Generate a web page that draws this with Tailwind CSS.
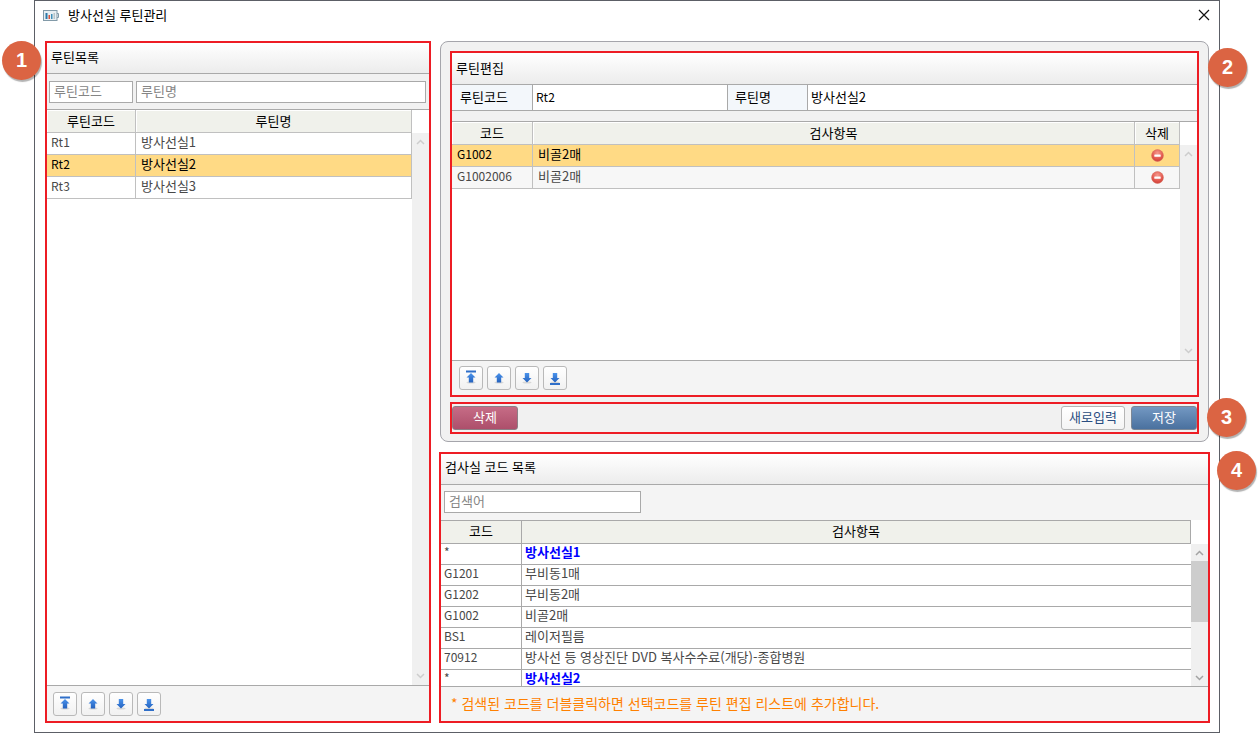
<!DOCTYPE html>
<html lang="ko">
<head>
<meta charset="utf-8">
<meta name="viewport" content="width=device-width, initial-scale=1">
<title>방사선실 루틴관리</title>
<script src="https://cdn.jsdelivr.net/npm/@tailwindcss/browser@4"></script>
</head>
<body class="bg-white font-['Noto_Sans_CJK_KR',sans-serif] text-[13px] leading-4 text-black">
<svg class="absolute size-0" aria-hidden="true">
  <defs>
    <linearGradient id="blue" x1="0" x2="0" y1="0" y2="1"><stop offset="0" stop-color="#4a93ec"/><stop offset="1" stop-color="#2461bd"/></linearGradient>
    <radialGradient id="red" cx=".5" cy=".3" r=".75"><stop offset="0" stop-color="#f59a8e"/><stop offset=".6" stop-color="#e45a50"/><stop offset="1" stop-color="#c93a34"/></radialGradient>
    <symbol id="up" viewBox="0 0 22 22"><ellipse cx="11" cy="15.5" rx="4.5" ry="1" fill="#000" opacity=".12"/><path d="M11 6l4.500 4.500h-2.300v5H8.800v-5H6.500z" fill="url(#blue)"/></symbol>
    <symbol id="down" viewBox="0 0 22 22"><ellipse cx="11" cy="15.5" rx="4.5" ry="1" fill="#000" opacity=".12"/><path d="M11 15.500L6.500 11h2.300V6h4.400v5h2.300z" fill="url(#blue)"/></symbol>
    <symbol id="top" viewBox="0 0 22 22"><use href="#up"/><path d="M6 3.500h10v2H6z" fill="#2f6fc9"/></symbol>
    <symbol id="bottom" viewBox="0 0 22 22"><use href="#down"/><path d="M6 16h10v2H6z" fill="#2f6fc9"/></symbol>
    <symbol id="minus" viewBox="0 0 13 13"><circle cx="6.500" cy="6.500" r="5.900" fill="url(#red)" stroke="#d9705f" stroke-width=".6"/><rect x="3.300" y="5.500" width="6.400" height="2.200" rx=".5" fill="#fff"/></symbol>
    <symbol id="chev-up" viewBox="0 0 9 6"><path d="M1 5l3.500-3.500L8 5" fill="none" stroke="currentColor" stroke-width="1.500"/></symbol>
    <symbol id="chev-down" viewBox="0 0 9 6"><path d="M1 1l3.500 3.500L8 1" fill="none" stroke="currentColor" stroke-width="1.500"/></symbol>
  </defs>
</svg>

<div class="h-screen min-h-[600px] pr-[39px] pl-[34px]">
<div class="flex h-full flex-col border border-[#5c5f66] bg-white">
  <header class="flex h-10 shrink-0 items-start pt-[6px] pr-[9px] pl-2">
    <svg class="mt-[3px] h-[11px] w-4 shrink-0" viewBox="0 0 16 11"><rect x=".5" y=".5" width="13.500" height="10" fill="#e8eff3" stroke="#829aa8"/><path d="M14 3.500h1.500v4H14" fill="none" stroke="#829aa8"/><path d="M2.500 3h2v6h-2z" fill="#2b78a8"/><path d="M5.500 5h1.500v4H5.500z" fill="#d8523c"/><path d="M8 4h1.500v5H8z" fill="#3f8fb8"/><path d="M10.500 3h1.500v6h-1.500z" fill="#b9c5c9"/></svg>
    <h1 class="ml-[9px] flex-1">방사선실 루틴관리</h1>
    <button type="button" aria-label="닫기" class="mt-[2px] size-3"><svg class="size-3" viewBox="0 0 12 12"><path d="M1 1l10 10M11 1L1 11" stroke="#111" stroke-width="1.200"/></svg></button>
  </header>

  <main class="flex min-h-0 flex-1 gap-2 pr-[9px] pb-[9px] pl-[10px]">
    <section class="relative flex w-[386px] shrink-0 flex-col border-2 border-[#ed1c24]">
      <span class="absolute -top-[2px] -left-[45px] flex size-[39px] items-center justify-center rounded-full bg-[#db6443] pb-px font-['Liberation_Sans'] text-xl font-bold text-white shadow-[1px_2px_1px_rgba(0,0,0,0.3)]">1</span>
      <h2 class="h-[31px] shrink-0 border-b border-[#a9a9a9] bg-linear-to-b from-white to-[#ececec] pt-[6px] pl-1">루틴목록</h2>
      <div class="flex h-9 shrink-0 gap-[3px] border-b border-[#a9a9a9] bg-[#f1f1f1] pt-[7px] pr-[3px] pl-[2px]">
        <input aria-label="루틴코드" placeholder="루틴코드" class="h-[22px] w-[84px] border border-[#a9a9a9] bg-white px-1 pb-[3px] placeholder:text-[#858585]">
        <input aria-label="루틴명" placeholder="루틴명" class="h-[22px] min-w-0 flex-1 border border-[#a9a9a9] bg-white px-1 pb-[3px] placeholder:text-[#858585]">
      </div>
      <div class="flex min-h-0 flex-1">
        <div class="min-w-0 flex-1">
          <table class="w-full table-fixed border-separate border-spacing-0 text-[#484848]">
            <colgroup><col class="w-[89px]"><col></colgroup>
            <thead><tr class="bg-[#f0f1eb] text-black">
              <th class="h-[23px] border-r border-b border-[#c0c0c0] p-0 font-normal shadow-[inset_1px_1px_0_#fff]">루틴코드</th>
              <th class="h-[23px] border-r border-b border-[#c0c0c0] p-0 font-normal shadow-[inset_1px_1px_0_#fff]">루틴명</th></tr></thead>
            <tbody>
              <tr><td class="h-[22px] border-r border-b border-[#c0c0c0] py-0 pr-0 pb-1 pl-1 text-xs">Rt1</td><td class="h-[22px] border-r border-b border-[#c0c0c0] py-0 pr-0 pb-1 pl-[5px]">방사선실1</td></tr>
              <tr class="bg-[#ffda85] text-black"><td class="h-[22px] border-r border-b border-[#c0c0c0] py-0 pr-0 pb-1 pl-1 text-xs">Rt2</td><td class="h-[22px] border-r border-b border-[#c0c0c0] py-0 pr-0 pb-1 pl-[5px]">방사선실2</td></tr>
              <tr><td class="h-[22px] border-r border-b border-[#c0c0c0] py-0 pr-0 pb-1 pl-1 text-xs">Rt3</td><td class="h-[22px] border-r border-b border-[#c0c0c0] py-0 pr-0 pb-1 pl-[5px]">방사선실3</td></tr>
            </tbody>
          </table>
        </div>
        <div class="mt-[23px] flex w-[17px] flex-col items-center justify-between bg-[#f0f0f0] py-[6px] text-[#cdcdcd]"><svg class="h-[6px] w-[9px]"><use href="#chev-up"/></svg><svg class="h-[6px] w-[9px]"><use href="#chev-down"/></svg></div>
      </div>
      <div class="flex h-9 shrink-0 gap-1 border-t border-[#a9a9a9] bg-[#f4f4f4] pt-[6px] pl-[6px]">
        <button type="button" aria-label="맨 위로" class="size-6 rounded-[3px] border border-[#b9b9b9] bg-linear-to-b from-white to-[#f1f1f1]"><svg class="size-[22px]"><use href="#top"/></svg></button>
        <button type="button" aria-label="위로" class="size-6 rounded-[3px] border border-[#b9b9b9] bg-linear-to-b from-white to-[#f1f1f1]"><svg class="size-[22px]"><use href="#up"/></svg></button>
        <button type="button" aria-label="아래로" class="size-6 rounded-[3px] border border-[#b9b9b9] bg-linear-to-b from-white to-[#f1f1f1]"><svg class="size-[22px]"><use href="#down"/></svg></button>
        <button type="button" aria-label="맨 아래로" class="size-6 rounded-[3px] border border-[#b9b9b9] bg-linear-to-b from-white to-[#f1f1f1]"><svg class="size-[22px]"><use href="#bottom"/></svg></button>
      </div>
    </section>

    <div class="flex min-w-0 flex-1 flex-col gap-[10px]">
      <section class="mx-px flex min-h-0 flex-1 flex-col gap-[5px] rounded-lg border border-[#a5a5ab] bg-[#f1f1f1] px-[9px] pt-[9px] pb-[7px]">
        <div class="relative flex min-h-0 flex-1 flex-col border-2 border-[#ed1c24]">
          <span class="absolute -top-[5px] -right-[50px] flex size-[39px] items-center justify-center rounded-full bg-[#db6443] pb-px font-['Liberation_Sans'] text-xl font-bold text-white shadow-[1px_2px_1px_rgba(0,0,0,0.3)]">2</span>
          <h2 class="h-8 shrink-0 border-b border-[#a9a9a9] bg-linear-to-b from-white to-[#ececec] pt-[7px] pl-1">루틴편집</h2>
          <div class="flex h-[26px] shrink-0 border-b border-[#a9a9a9] bg-white">
            <label for="code" class="w-[81px] shrink-0 border-r border-[#a9a9a9] bg-[#f3f7fb] pt-1 pl-2">루틴코드</label>
            <input id="code" value="Rt2" class="w-[195px] shrink-0 border-r border-[#a9a9a9] px-[3px] pb-[2px] text-xs">
            <label for="name" class="w-20 shrink-0 border-r border-[#a9a9a9] bg-[#f3f7fb] pt-1 pl-[7px]">루틴명</label>
            <input id="name" value="방사선실2" class="min-w-0 flex-1 px-[3px] pb-[2px]">
          </div>
          <div class="mt-[10px] flex min-h-0 flex-1 border-t border-[#a9a9a9] bg-white">
            <div class="min-w-0 flex-1">
              <table class="w-full table-fixed border-separate border-spacing-0 text-[#484848]">
                <colgroup><col class="w-[81px]"><col><col class="w-[45px]"></colgroup>
                <thead><tr class="bg-[#f0f1eb] text-black">
                  <th class="h-[23px] border-r border-b border-[#c0c0c0] p-0 font-normal shadow-[inset_1px_1px_0_#fff]">코드</th>
                  <th class="h-[23px] border-r border-b border-[#c0c0c0] p-0 font-normal shadow-[inset_1px_1px_0_#fff]">검사항목</th>
                  <th class="h-[23px] border-r border-b border-[#c0c0c0] p-0 font-normal shadow-[inset_1px_1px_0_#fff]">삭제</th></tr></thead>
                <tbody>
                  <tr class="bg-[#ffda85] text-black"><td class="h-[22px] border-r border-b border-[#c0c0c0] py-0 pr-0 pb-1 pl-[5px] text-xs">G1002</td><td class="h-[22px] border-r border-b border-[#c0c0c0] py-0 pr-0 pb-1 pl-[5px]">비골2매</td><td class="h-[22px] border-r border-b border-[#c0c0c0] p-0 text-center"><button type="button" aria-label="G1002 삭제" class="mx-auto block"><svg class="block size-[13px]"><use href="#minus"/></svg></button></td></tr>
                  <tr class="bg-[#f7f7f7]"><td class="h-[22px] border-r border-b border-[#c0c0c0] py-0 pr-0 pb-1 pl-[5px] text-xs">G1002006</td><td class="h-[22px] border-r border-b border-[#c0c0c0] py-0 pr-0 pb-1 pl-[5px]">비골2매</td><td class="h-[22px] border-r border-b border-[#c0c0c0] p-0 text-center"><button type="button" aria-label="G1002006 삭제" class="mx-auto block"><svg class="block size-[13px]"><use href="#minus"/></svg></button></td></tr>
                </tbody>
              </table>
            </div>
            <div class="mt-[23px] flex w-[17px] flex-col items-center justify-between bg-[#f0f0f0] py-[6px] text-[#cdcdcd]"><svg class="h-[6px] w-[9px]"><use href="#chev-up"/></svg><svg class="h-[6px] w-[9px]"><use href="#chev-down"/></svg></div>
          </div>
          <div class="flex h-[35px] shrink-0 gap-1 border-t border-[#a9a9a9] bg-[#f4f4f4] pt-[5px] pl-[7px]">
            <button type="button" aria-label="맨 위로" class="size-6 rounded-[3px] border border-[#b9b9b9] bg-linear-to-b from-white to-[#f1f1f1]"><svg class="size-[22px]"><use href="#top"/></svg></button>
            <button type="button" aria-label="위로" class="size-6 rounded-[3px] border border-[#b9b9b9] bg-linear-to-b from-white to-[#f1f1f1]"><svg class="size-[22px]"><use href="#up"/></svg></button>
            <button type="button" aria-label="아래로" class="size-6 rounded-[3px] border border-[#b9b9b9] bg-linear-to-b from-white to-[#f1f1f1]"><svg class="size-[22px]"><use href="#down"/></svg></button>
            <button type="button" aria-label="맨 아래로" class="size-6 rounded-[3px] border border-[#b9b9b9] bg-linear-to-b from-white to-[#f1f1f1]"><svg class="size-[22px]"><use href="#bottom"/></svg></button>
          </div>
        </div>
        <div class="relative flex h-8 shrink-0 items-center gap-[6px] border-2 border-[#ed1c24]">
          <span class="absolute -top-[6px] -right-[49px] flex size-[39px] items-center justify-center rounded-full bg-[#db6443] pb-px font-['Liberation_Sans'] text-xl font-bold text-white shadow-[1px_2px_1px_rgba(0,0,0,0.3)]">3</span>
          <button type="button" class="mr-auto h-6 w-[66px] rounded-[3px] border border-[#8d7f86] bg-linear-to-b from-[#c66c86] to-[#ad4f6b] pb-[2px] text-white">삭제</button>
          <button type="button" class="h-6 w-16 rounded-[3px] border border-[#b5b5b5] bg-linear-to-b from-white to-[#f4f4f4] pb-[2px] text-[#2a4d80]">새로입력</button>
          <button type="button" class="h-6 w-[66px] rounded-[3px] border border-[#7c8796] bg-linear-to-b from-[#7398c2] to-[#4a719f] pb-[2px] text-white">저장</button>
        </div>
      </section>

      <section class="relative flex shrink-0 flex-col border-2 border-[#ed1c24]">
        <span class="absolute -top-[3px] -right-[48px] flex size-[39px] items-center justify-center rounded-full bg-[#db6443] pb-px font-['Liberation_Sans'] text-xl font-bold text-white shadow-[1px_2px_1px_rgba(0,0,0,0.3)]">4</span>
        <h2 class="h-[31px] border-b border-[#a9a9a9] bg-linear-to-b from-white to-[#ececec] pt-[5px] pl-1">검사실 코드 목록</h2>
        <div class="flex h-[35px] bg-[#f4f4f4] pt-[6px] pl-[3px]">
          <input aria-label="검색어" placeholder="검색어" class="h-[22px] w-[197px] border border-[#a9a9a9] bg-white px-1 pb-[3px] placeholder:text-[#858585]">
        </div>
        <div class="flex h-[166px] overflow-hidden">
          <div class="min-w-0 flex-1">
            <table class="w-full table-fixed border-separate border-spacing-0 text-[#484848]">
              <colgroup><col class="w-[81px]"><col></colgroup>
              <thead><tr class="bg-[#f0f1eb] text-black">
                <th class="h-6 border-y border-r border-[#a9a9a9] p-0 pb-[2px] font-normal">코드</th>
                <th class="h-6 border-y border-r border-[#a9a9a9] p-0 pb-[2px] font-normal">검사항목</th></tr></thead>
              <tbody>
                <tr><td class="h-[21px] border-r border-b border-[#a9a9a9] py-0 pr-0 pb-1 pl-[3px] text-xs">*</td><td class="h-[21px] border-b border-[#a9a9a9] py-0 pr-0 pb-1 pl-[3px] font-bold text-[#0000ff]">방사선실1</td></tr>
                <tr><td class="h-[21px] border-r border-b border-[#a9a9a9] py-0 pr-0 pb-1 pl-[3px] text-xs">G1201</td><td class="h-[21px] border-b border-[#a9a9a9] py-0 pr-0 pb-1 pl-[3px]">부비동1매</td></tr>
                <tr><td class="h-[21px] border-r border-b border-[#a9a9a9] py-0 pr-0 pb-1 pl-[3px] text-xs">G1202</td><td class="h-[21px] border-b border-[#a9a9a9] py-0 pr-0 pb-1 pl-[3px]">부비동2매</td></tr>
                <tr><td class="h-[21px] border-r border-b border-[#a9a9a9] py-0 pr-0 pb-1 pl-[3px] text-xs">G1002</td><td class="h-[21px] border-b border-[#a9a9a9] py-0 pr-0 pb-1 pl-[3px]">비골2매</td></tr>
                <tr><td class="h-[21px] border-r border-b border-[#a9a9a9] py-0 pr-0 pb-1 pl-[3px] text-xs">BS1</td><td class="h-[21px] border-b border-[#a9a9a9] py-0 pr-0 pb-1 pl-[3px]">레이저필름</td></tr>
                <tr><td class="h-[21px] border-r border-b border-[#a9a9a9] py-0 pr-0 pb-1 pl-[3px] text-xs">70912</td><td class="h-[21px] border-b border-[#a9a9a9] py-0 pr-0 pb-1 pl-[3px]">방사선 등 영상진단 DVD 복사수수료(개당)-종합병원</td></tr>
                <tr><td class="h-4 border-r border-[#a9a9a9] py-0 pr-0 pl-[3px] text-xs leading-4">*</td><td class="h-4 py-0 pr-0 pl-[3px] font-bold text-[#0000ff]">방사선실2</td></tr>
              </tbody>
            </table>
          </div>
          <div class="mt-6 flex w-[17px] flex-col items-center bg-[#f0f0f0] pt-[6px] pb-[5px] text-[#a3a3a3]"><svg class="h-[6px] w-[9px] shrink-0"><use href="#chev-up"/></svg><div class="mt-[5px] mb-auto h-[61px] w-full bg-[#cdcdcd]"></div><svg class="h-[6px] w-[9px] shrink-0"><use href="#chev-down"/></svg></div>
        </div>
        <p class="h-[35px] border-t border-[#a9a9a9] bg-[#f4f4f4] pt-2 pl-[10px] text-sm leading-4 text-[#ff8000]">* 검색된 코드를 더블클릭하면 선택코드를 루틴 편집 리스트에 추가합니다.</p>
      </section>
    </div>
  </main>
</div>
</div>
</body>
</html>
